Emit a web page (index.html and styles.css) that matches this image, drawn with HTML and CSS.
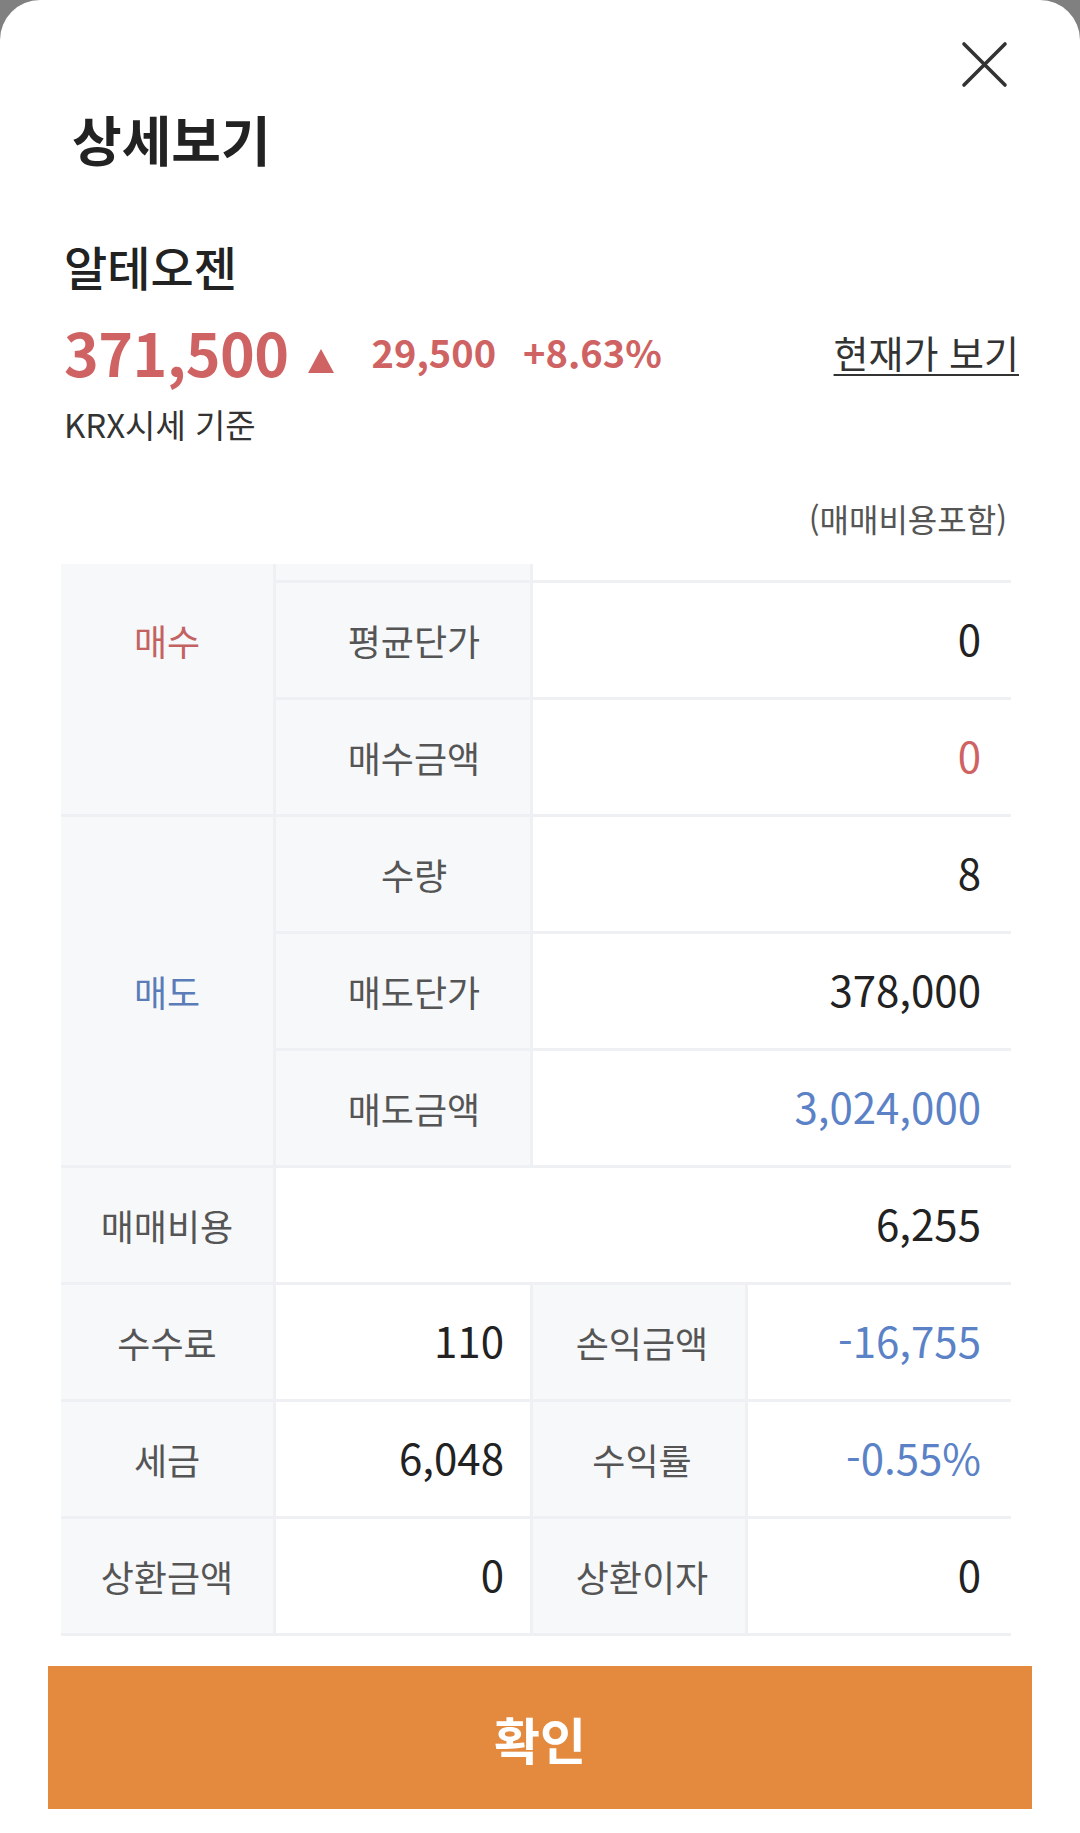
FILE: index.html
```html
<!DOCTYPE html>
<html lang="ko">
<head>
<meta charset="utf-8">
<title>상세보기</title>
<link rel="stylesheet" href="styles.css">
</head>
<body>
<div class="sheet">
  <div class="topbar">
    <button class="close" aria-label="닫기">
      <svg width="47" height="47" viewBox="0 0 47 47"><path d="M3 3 L44 44 M44 3 L3 44" stroke="#333" stroke-width="3.6" stroke-linecap="round" fill="none"/></svg>
    </button>
  </div>
  <h1 class="title">상세보기</h1>
  <div class="name">알테오젠</div>
  <div class="price-row">
    <span class="price">371,500</span>
    <span class="arrow"><svg width="26" height="24" viewBox="0 0 26 24"><path d="M13 0 L26 24 L0 24 Z" fill="#cf6363"/></svg></span>
    <span class="change">29,500</span>
    <span class="rate">+8.63%</span>
    <a class="quote-link">현재가 보기</a>
  </div>
  <div class="basis">KRX시세 기준</div>
  <div class="note">(매매비용포함)</div>
  <div class="table-scroll">
    <div class="grid">
      <div class="cell head group buy">매수</div>
      <div class="cell head sub">수량</div>
      <div class="cell val span2">0</div>
      <div class="cell head sub">평균단가</div>
      <div class="cell val span2">0</div>
      <div class="cell head sub">매수금액</div>
      <div class="cell val span2 red">0</div>

      <div class="cell head group sell">매도</div>
      <div class="cell head sub">수량</div>
      <div class="cell val span2">8</div>
      <div class="cell head sub">매도단가</div>
      <div class="cell val span2">378,000</div>
      <div class="cell head sub">매도금액</div>
      <div class="cell val span2 blue">3,024,000</div>

      <div class="cell head">매매비용</div>
      <div class="cell val span3">6,255</div>

      <div class="cell head">수수료</div>
      <div class="cell val mid">110</div>
      <div class="cell head third">손익금액</div>
      <div class="cell val blue">-16,755</div>

      <div class="cell head">세금</div>
      <div class="cell val mid">6,048</div>
      <div class="cell head third">수익률</div>
      <div class="cell val blue">-0.55%</div>

      <div class="cell head">상환금액</div>
      <div class="cell val mid">0</div>
      <div class="cell head third">상환이자</div>
      <div class="cell val">0</div>
    </div>
  </div>
  <button class="confirm">확인</button>
</div>
</body>
</html>
```
FILE: styles.css
```css
* { box-sizing: border-box; }
html, body {
  margin: 0;
  padding: 0;
  background: #808080;
}
body {
  width: 1080px;
  height: 1833px;
  overflow: hidden;
  font-family: "Noto Sans CJK KR", "Noto Sans", sans-serif;
  color: #222;
}
.sheet {
  background: #fff;
  width: 1080px;
  height: 1833px;
  border-radius: 40px 40px 0 0;
  display: flex;
  flex-direction: column;
}
.topbar {
  display: flex;
  justify-content: flex-end;
  padding: 41px 72px 0 0;
  height: 88px;
}
.close {
  width: 47px;
  height: 47px;
  padding: 0;
  border: 0;
  background: none;
  display: block;
}
.close svg { display: block; }
.title {
  margin: 24px 0 0 72px;
  font-size: 54px;
  line-height: 54px;
  font-weight: 700;
  color: #222;
}
.name {
  margin: 76px 0 0 64px;
  font-size: 47px;
  line-height: 47px;
  font-weight: 500;
  color: #222;
}
.price-row {
  margin: 32px 61px 0 64px;
  height: 62px;
  display: flex;
  align-items: center;
  color: #cf6363;
  font-weight: 700;
}
.price {
  font-size: 59px;
  line-height: 62px;
  letter-spacing: -0.5px;
}
.arrow {
  margin-left: 19px;
  display: flex;
  align-self: flex-end;
  margin-bottom: 10px;
}
.change {
  margin-left: 38px;
  font-size: 38px;
  line-height: 38px;
}
.rate {
  margin-left: 27px;
  font-size: 38px;
  line-height: 38px;
}
.quote-link {
  margin-left: auto;
  font-size: 38px;
  line-height: 38px;
  font-weight: 400;
  color: #333;
  text-decoration: underline;
  text-underline-offset: 6px;
  text-decoration-thickness: 2px;
}
.basis {
  margin: 25px 0 0 64px;
  font-size: 33px;
  line-height: 33px;
  color: #333;
}
.note {
  margin: 61px 73px 0 0;
  text-align: right;
  font-size: 32px;
  line-height: 32px;
  color: #555;
}
.table-scroll {
  margin: 30px 69px 0 61px;
  height: 1072px;
  overflow: hidden;
}
.grid {
  margin-top: -101px;
  display: grid;
  grid-template-columns: 212px 254px 212px 263px;
  grid-auto-rows: 114px;
  gap: 3px;
  padding: 3px 0;
  background: #eef0f3;
}
.cell {
  display: flex;
  align-items: center;
  background: #fff;
}
.head {
  background: #f7f8fa;
  justify-content: center;
  font-size: 36px;
  color: #555;
}
.head.sub { padding-left: 22px; }
.head.third { padding-left: 6px; }
.val {
  justify-content: flex-end;
  padding: 0 30px 5px 0;
  font-size: 42px;
  color: #222;
}
.val.mid { padding-right: 26px; }
.group { grid-row: span 3; }
.span2 { grid-column: span 2; }
.span3 { grid-column: span 3; }
.buy { color: #c46262; }
.sell { color: #5a7cb8; }
.red { color: #cf6363; }
.blue { color: #5b82c6; }
.confirm {
  margin: 30px 48px 0 48px;
  height: 143px;
  border: 0;
  border-radius: 0;
  background: #e38a3e;
  color: #fff;
  font-family: "Noto Sans CJK KR", "Noto Sans", sans-serif;
  font-size: 50px;
  font-weight: 700;
  padding: 0;
}
```
